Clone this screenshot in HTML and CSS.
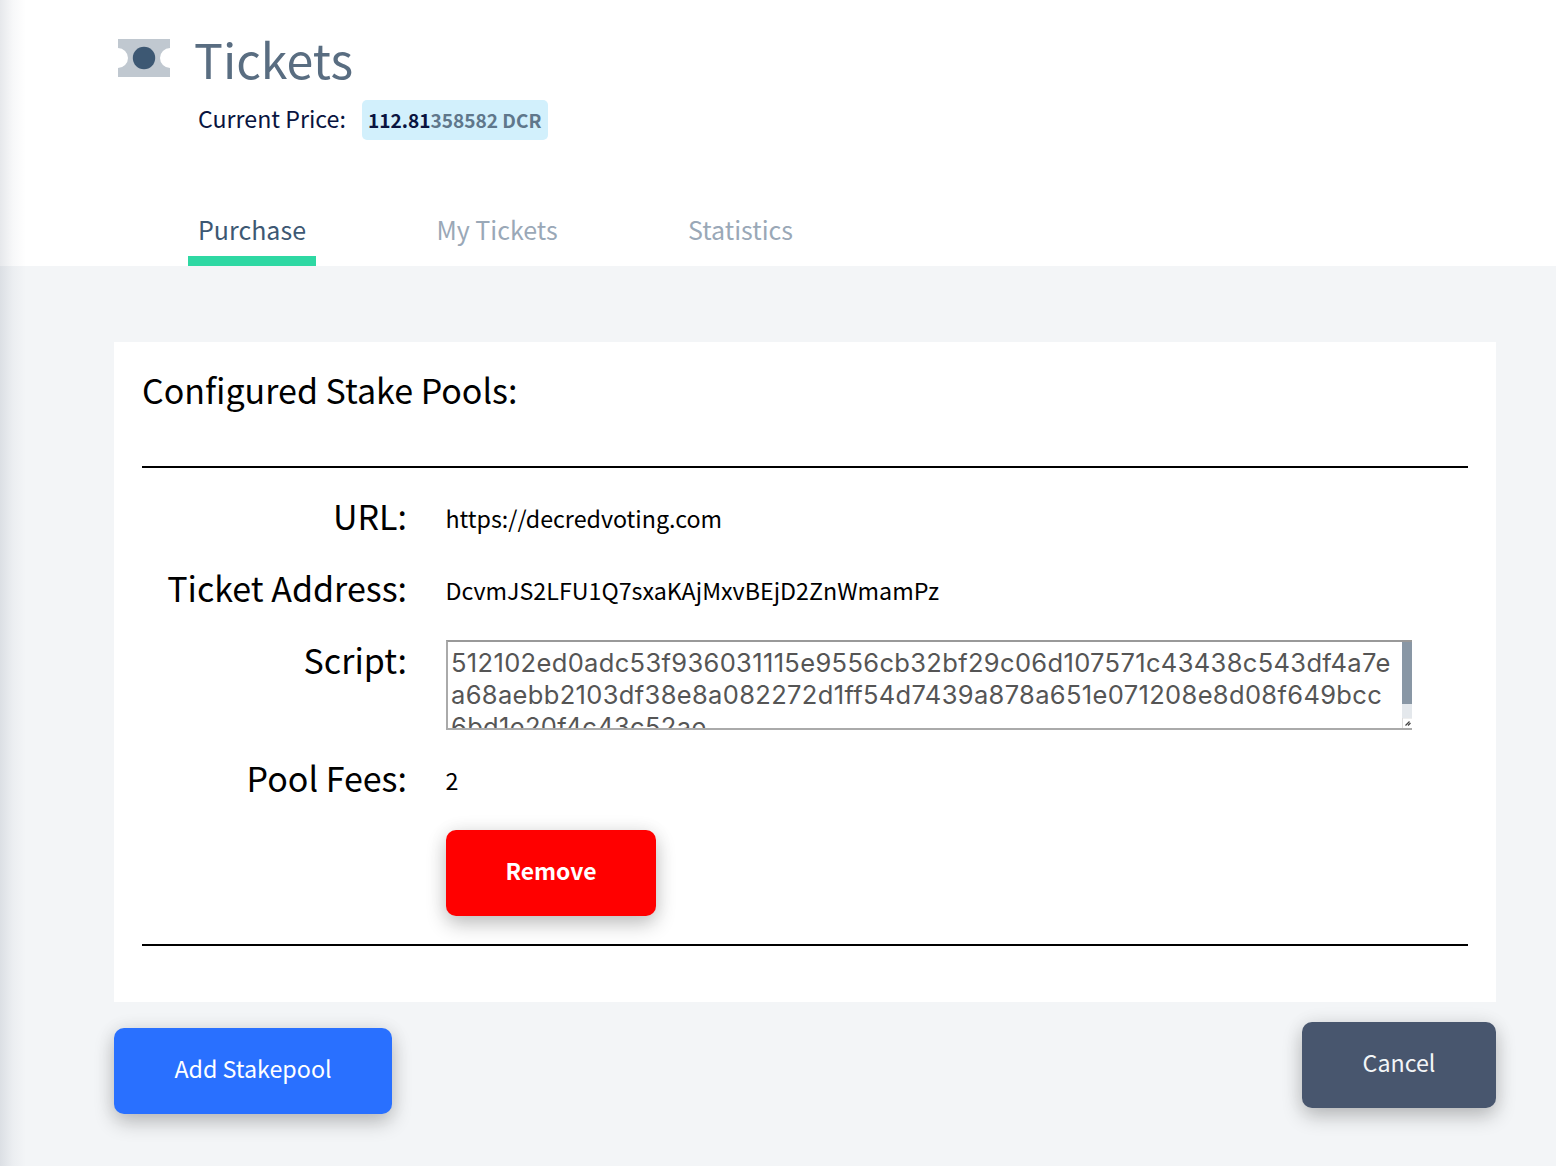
FILE: index.html
```html
<!DOCTYPE html>
<html lang="en">
<head>
<meta charset="utf-8">
<title>Tickets</title>
<link rel="stylesheet" href="styles.css">
</head>
<body>
<div class="page">
  <header class="header">
    <div class="title-row">
      <svg class="ticket-icon" viewBox="0 0 52 38" width="52" height="38" aria-hidden="true">
        <path d="M0 0H52V9A10 10 0 0 0 52 29V38H0V29A10 10 0 0 0 0 9Z" fill="#c0c8d0"/>
        <circle cx="26" cy="19" r="11.2" fill="#3d5873"/>
      </svg>
      <h1 class="title">Tickets</h1>
    </div>
    <div class="price-row">
      <span class="price-label">Current Price:</span>
      <span class="price"><span class="price-main">112.81</span>358582 DCR</span>
    </div>
    <nav class="tabs">
      <a class="tab tab-active">Purchase</a>
      <a class="tab">My Tickets</a>
      <a class="tab">Statistics</a>
    </nav>
  </header>
  <main class="content">
    <section class="card">
      <h2 class="card-title">Configured Stake Pools:</h2>
      <div class="pool">
        <div class="label">URL:</div><div class="value">https://decredvoting.com</div>
        <div class="label">Ticket Address:</div><div class="value">DcvmJS2LFU1Q7sxaKAjMxvBEjD2ZnWmamPz</div>
        <div class="label">Script:</div>
        <div class="script">
          <div class="script-text">512102ed0adc53f936031115e9556cb32bf29c06d107571c43438c543df4a7e<br>a68aebb2103df38e8a082272d1ff54d7439a878a651e071208e8d08f649bcc<br>6bd1e20f4c43c52ae</div>
          <div class="scrollbar">
            <div class="thumb"></div>
            <svg class="grip" viewBox="0 0 10 10" width="10" height="10" aria-hidden="true"><path d="M0 0H10M.5 0V10" stroke="#ddd"/><path d="M3.5 7.5L7.5 3.5M6 7.5L8.5 5" stroke="#444" stroke-width="1.2"/></svg>
          </div>
        </div>
        <div class="label">Pool Fees:</div><div class="value">2</div>
        <button class="button remove">Remove</button>
      </div>
    </section>
    <div class="actions">
      <button class="button add">Add Stakepool</button>
      <button class="button cancel">Cancel</button>
    </div>
  </main>
</div>
</body>
</html>
```
FILE: styles.css
```css
* { box-sizing: border-box; }
body { margin: 0; font-family: "Noto Sans CJK SC", "Noto Sans", sans-serif; color: #000; }
.page { position: relative; height: 1166px; background: #f3f5f7; overflow: hidden; }
.page::before { content: ""; position: absolute; inset: 0 auto 0 0; width: 26px; background: linear-gradient(to right, rgba(12,30,62,.1), rgba(12,30,62,.03) 50%, rgba(12,30,62,0)); }
.header { height: 266px; padding: 36px 0 0 118px; background: #fff; display: flex; flex-direction: column; }
.title-row { display: flex; gap: 24px; height: 50px; }
.ticket-icon { margin-top: 3px; }
.title { margin: 0; font-size: 48.3px; line-height: 44px; font-weight: 400; color: #596d81; }
.price-row { display: flex; align-items: center; gap: 16px; height: 40px; margin: 14px 0 0 80px; }
.price-label { font-size: 23.2px; line-height: 34px; padding-bottom: 5px; color: #091440; }
.price { width: 186px; height: 40px; padding-left: 6px; border-radius: 5px; background: #d2f0fc; font-size: 19.1px; line-height: 40px; font-weight: 600; color: #5f778b; white-space: nowrap; }
.price-main { color: #091440; }
.tabs { display: flex; gap: 110.4px; height: 70px; margin: 56px 0 0 70px; }
.tab { height: 70px; padding: 10px 10px 0; font-size: 25px; line-height: 46px; color: #9aa8b7; }
.tab-active { color: #3d5873; border-bottom: 10px solid #2ed8a3; }
.content { padding: 76px 60px 0 114px; }
.card { height: 660px; padding: 24px 28px; background: #fff; }
.card-title { margin: 0; height: 100px; font-size: 34px; line-height: 48px; font-weight: 400; }
.pool { height: 480px; padding-top: 14px; border-top: 2px solid; border-bottom: 2px solid; display: grid; grid-template-columns: 265px 966px; grid-template-rows: 72px 72px 118px 86px 86px; column-gap: 39px; }
.label { font-size: 34px; line-height: 68px; text-align: right; }
.value { margin-left: -.6px; font-size: 23.25px; line-height: 72px; }
.script { display: flex; justify-content: space-between; height: 90px; margin-top: 14px; border: 2px solid #aaa; border-top-color: #999; border-right: 0; overflow: hidden; }
.script-text { padding: 5px 0 0 3px; font: 25.5px/32px Inter, sans-serif; letter-spacing: .34px; color: #555; white-space: nowrap; }
.scrollbar { display: flex; flex-direction: column; width: 10px; background: #e4e8ec; }
.thumb { height: 62px; background: #8997a5; }
.grip { margin-top: auto; background: #fff; }
.button { border: 0; border-radius: 10px; height: 86px; padding: 0 0 7px; color: #fff; font: 23.25px "Noto Sans CJK SC", sans-serif; box-shadow: 0 8px 20px rgba(0,0,0,.24), 0 0 20px rgba(0,0,0,.06); }
.remove { grid-column: 2; width: 210px; background: #f00; font-size: 22.9px; font-weight: 600; }
.actions { display: flex; justify-content: space-between; padding-top: 20px; }
.add { width: 278px; margin-top: 6px; background: #2970ff; }
.cancel { width: 194px; background: #48566e; color: #f3f5f7; }
```
